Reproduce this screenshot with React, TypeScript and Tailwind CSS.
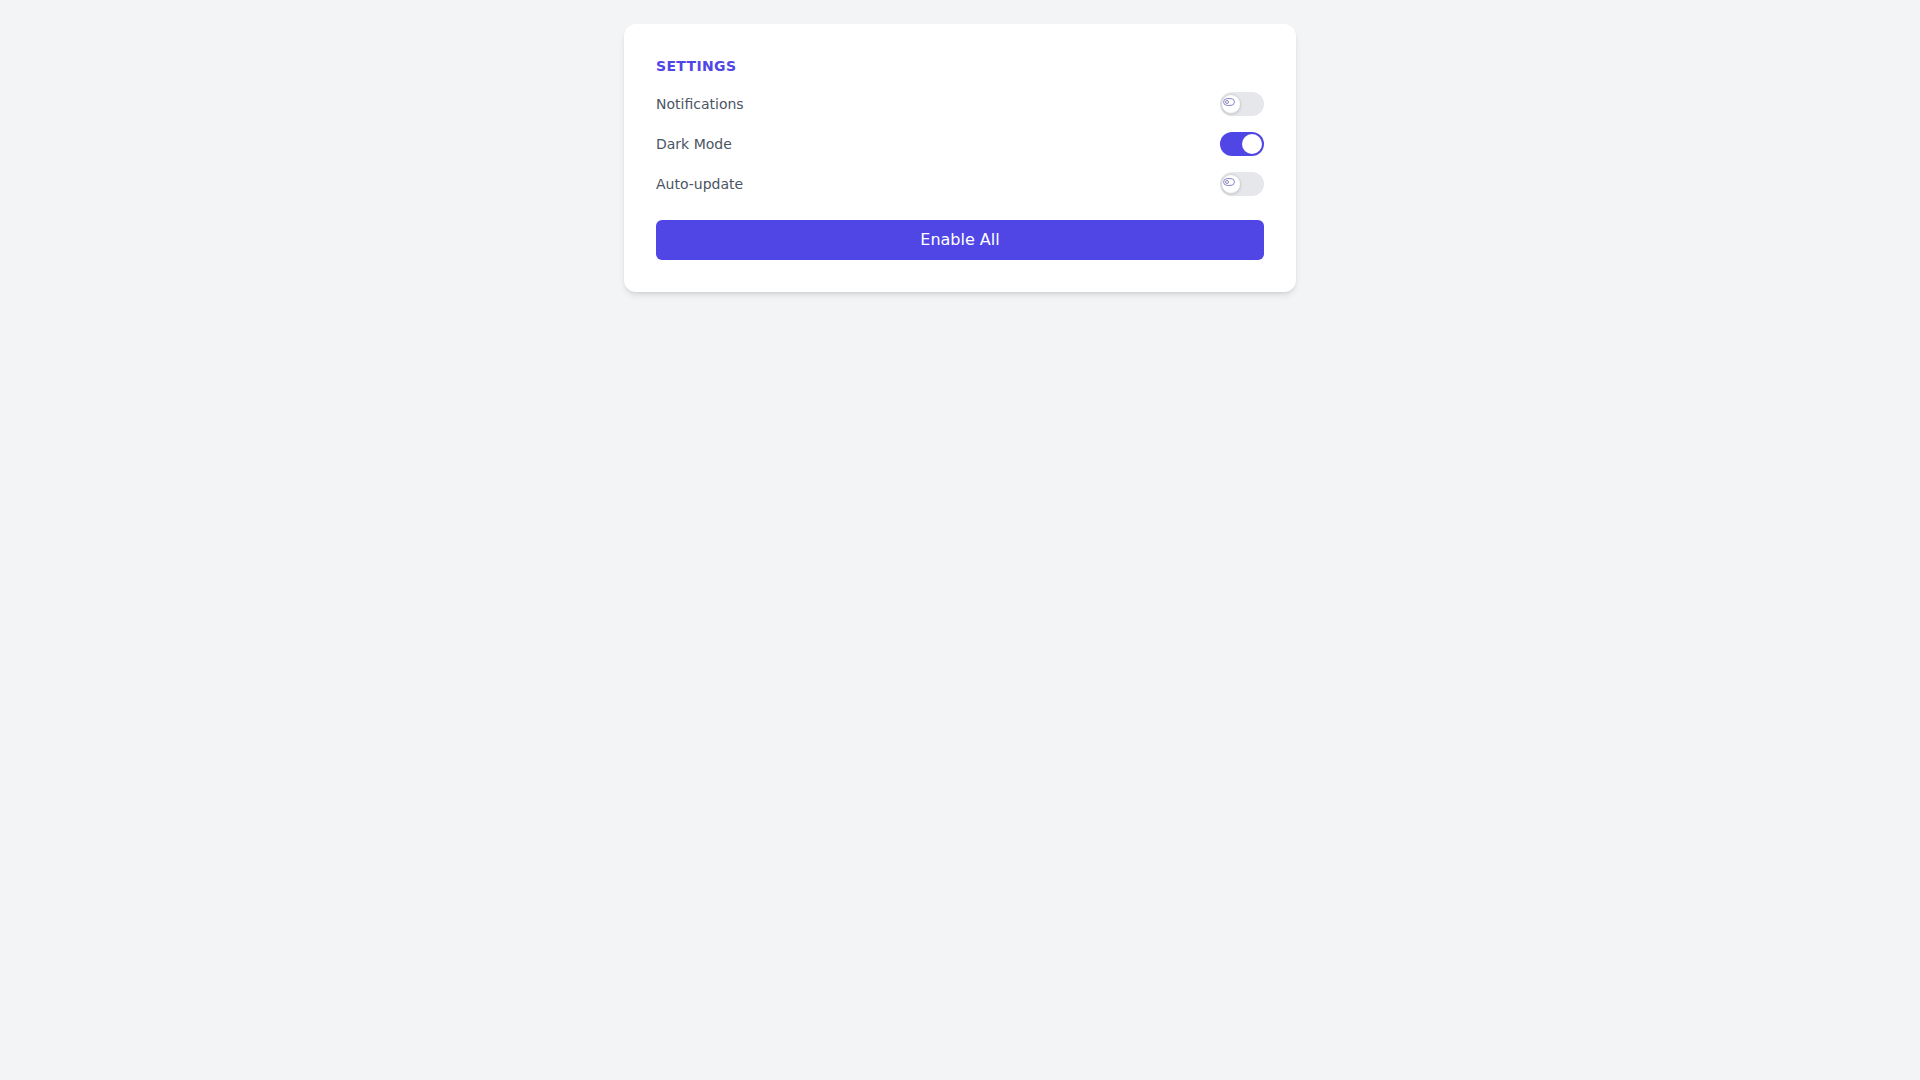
import { useState } from 'react';

type Setting = { key: string; label: string; on: boolean };

const initialSettings: Setting[] = [
  { key: 'notifications', label: 'Notifications', on: false },
  { key: 'darkMode', label: 'Dark Mode', on: true },
  { key: 'autoUpdate', label: 'Auto-update', on: false },
];

function Toggle({ on, onClick }: { on: boolean; onClick: () => void }) {
  return (
    <button
      type="button"
      onClick={onClick}
      className={`relative w-11 h-6 rounded-full flex items-center px-[2px] ${
        on ? 'bg-[#4f46e5] justify-end' : 'bg-[#e5e7eb] justify-start'
      }`}
    >
      {on ? (
        <span className="w-5 h-5 rounded-full bg-white" />
      ) : (
        <span className="relative w-5 h-5 -ml-[1px] rounded-full bg-white border border-[#d1d5db] shadow-sm">
          {/* tiny glyph inside the off knob */}
          <svg className="absolute left-[1px] top-[3px] w-3 h-2" viewBox="0 0 12 8" fill="none">
            <rect x="0.6" y="0.6" width="10.8" height="6.8" rx="3.4" stroke="#8b87c9" strokeWidth="1" />
            <circle cx="4" cy="4" r="1.5" stroke="#8b87c9" strokeWidth="1" />
          </svg>
        </span>
      )}
    </button>
  );
}

export default function App() {
  const [settings, setSettings] = useState<Setting[]>(initialSettings);

  function flip(key: string) {
    setSettings((prev) => prev.map((s) => (s.key === key ? { ...s, on: !s.on } : s)));
  }

  function enableAll() {
    setSettings((prev) => prev.map((s) => ({ ...s, on: true })));
  }

  return (
    <div
      className="min-h-screen bg-[#f3f4f6] pt-6"
      style={{ fontFamily: '"DejaVu Sans", sans-serif' }}
    >
      <div className="mx-auto max-w-2xl bg-white rounded-xl shadow-md p-8">
        <h2 className="text-sm font-bold uppercase tracking-wide text-[#4f46e5] mb-4">Settings</h2>

        <div className="space-y-4">
          {settings.map((s) => (
            <div key={s.key} className="flex items-center justify-between h-6">
              <span className="text-sm text-[#4b5563]">{s.label}</span>
              <Toggle on={s.on} onClick={() => flip(s.key)} />
            </div>
          ))}
        </div>

        <button
          type="button"
          onClick={enableAll}
          className="mt-6 w-full h-10 rounded-md bg-[#4f46e5] text-white text-base"
        >
          Enable All
        </button>
      </div>
    </div>
  );
}
